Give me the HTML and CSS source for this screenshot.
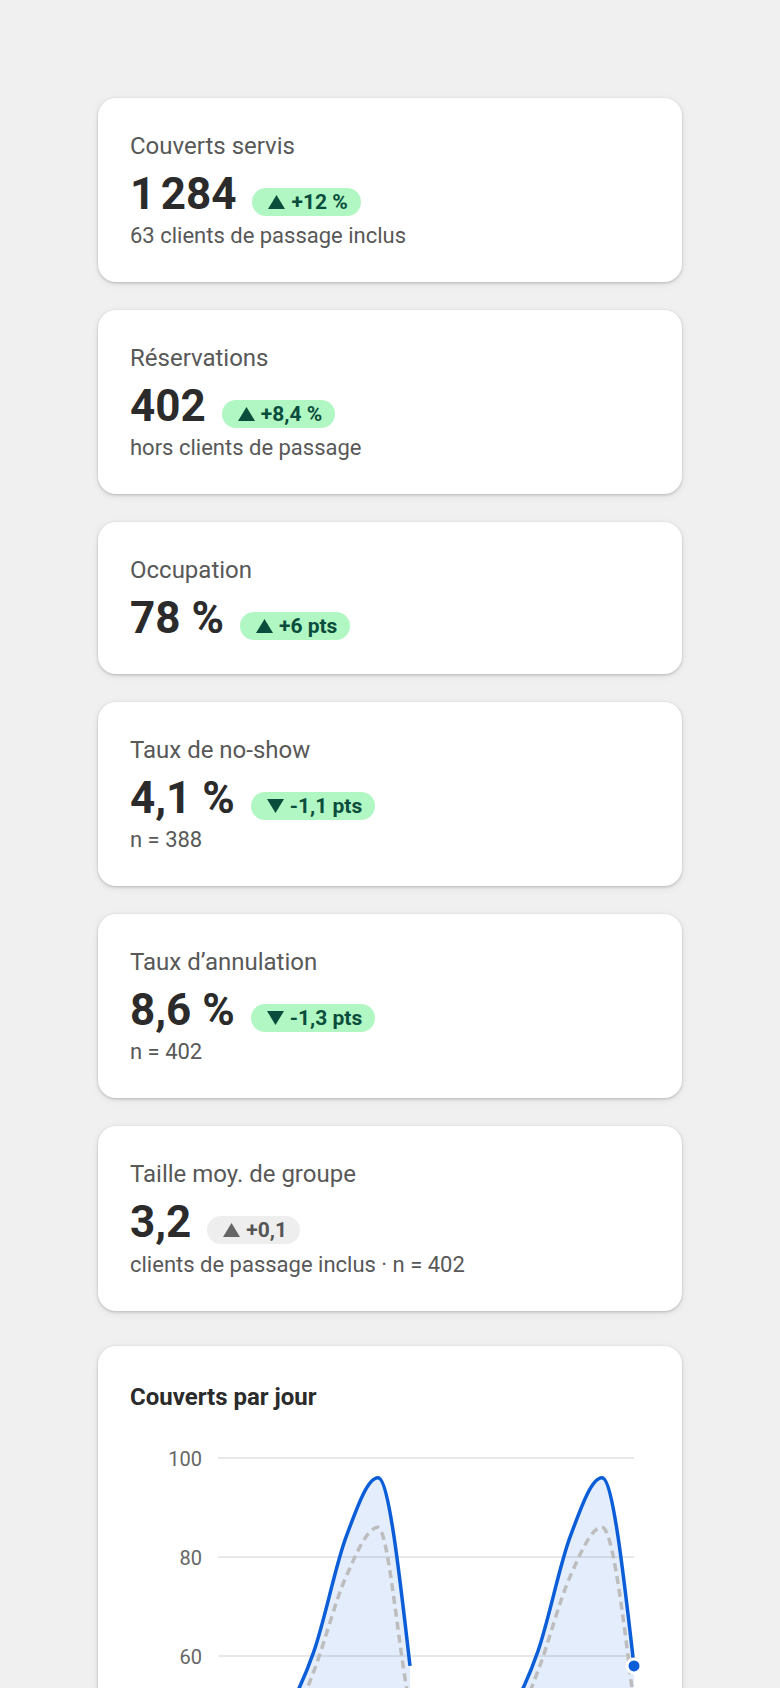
FILE: index.html
```html
<!DOCTYPE html>
<html lang="fr">
<head>
    <meta charset="UTF-8">
    <meta name="viewport" content="width=device-width, initial-scale=1.0">
    <title>Tableau de bord — Salle</title>
    <link rel="stylesheet" href="styles.css">
</head>
<body>
    <main class="page">
        <section class="card">
            <div class="kpi-label">Couverts servis</div>
            <div class="kpi-row">
                <span class="kpi-value">1&#8239;284</span>
                <span class="badge up"><svg viewBox="0 0 16 13"><path d="M8 0L16 13H0Z"/></svg>+12&nbsp;%</span>
            </div>
            <div class="kpi-sub">63 clients de passage inclus</div>
        </section>

        <section class="card">
            <div class="kpi-label">Réservations</div>
            <div class="kpi-row">
                <span class="kpi-value">402</span>
                <span class="badge up"><svg viewBox="0 0 16 13"><path d="M8 0L16 13H0Z"/></svg>+8,4&nbsp;%</span>
            </div>
            <div class="kpi-sub">hors clients de passage</div>
        </section>

        <section class="card">
            <div class="kpi-label">Occupation</div>
            <div class="kpi-row">
                <span class="kpi-value">78&nbsp;%</span>
                <span class="badge up"><svg viewBox="0 0 16 13"><path d="M8 0L16 13H0Z"/></svg>+6 pts</span>
            </div>
        </section>

        <section class="card">
            <div class="kpi-label">Taux de no-show</div>
            <div class="kpi-row">
                <span class="kpi-value">4,1&nbsp;%</span>
                <span class="badge up"><svg viewBox="0 0 16 13"><path d="M0 0H16L8 13Z"/></svg>-1,1 pts</span>
            </div>
            <div class="kpi-sub">n = 388</div>
        </section>

        <section class="card">
            <div class="kpi-label">Taux d’annulation</div>
            <div class="kpi-row">
                <span class="kpi-value">8,6&nbsp;%</span>
                <span class="badge up"><svg viewBox="0 0 16 13"><path d="M0 0H16L8 13Z"/></svg>-1,3 pts</span>
            </div>
            <div class="kpi-sub">n = 402</div>
        </section>

        <section class="card">
            <div class="kpi-label">Taille moy. de groupe</div>
            <div class="kpi-row">
                <span class="kpi-value">3,2</span>
                <span class="badge flat"><svg viewBox="0 0 16 13"><path d="M8 0L16 13H0Z"/></svg>+0,1</span>
            </div>
            <div class="kpi-sub">clients de passage inclus · n = 402</div>
        </section>

        <section class="card chart-card">
            <h2 class="chart-title">Couverts par jour</h2>
            <svg class="chart" viewBox="0 0 521 300" width="521" height="300">
                <g class="grid">
                    <line x1="88" y1="28" x2="504" y2="28"/>
                    <line x1="88" y1="127" x2="504" y2="127"/>
                    <line x1="88" y1="226" x2="504" y2="226"/>
                </g>
                <g class="axis-label">
                    <text x="72" y="35.5">100</text>
                    <text x="72" y="134.5">80</text>
                    <text x="72" y="233.5">60</text>
                </g>
                <!-- semaine courante : fermé le jour 7 -->
                <path class="area" d="M88,305.2 C98.67,315.1 109.33,325 120,325 C130.67,325 141.33,307.68 152,290.35 C162.67,273.02 173.33,251.58 184,221.05 C194.67,190.52 205.33,136.07 216,107.2 C226.67,78.33 237.33,47.8 248,47.8 C258.67,47.8 269.33,141.85 280,235.9 L280,330 L88,330 Z"/>
                <path class="area" d="M344,325 C354.67,316.34 365.33,307.68 376,290.35 C386.67,273.02 397.33,251.58 408,221.05 C418.67,190.52 429.33,136.07 440,107.2 C450.67,78.33 461.33,47.8 472,47.8 C482.67,47.8 493.33,141.85 504,235.9 L504,330 L344,330 Z"/>
                <!-- période précédente -->
                <path class="line-prev" d="M88,334.9 C98.67,344.8 109.33,354.7 120,354.7 C130.67,354.7 141.33,334.08 152,315.1 C162.67,296.12 173.33,268.9 184,240.85 C194.67,212.8 205.33,170.73 216,146.8 C226.67,122.87 237.33,97.3 248,97.3 C258.67,97.3 269.33,229.3 280,275.5 C290.67,321.7 301.33,374.5 312,374.5 C322.67,374.5 333.33,354.7 344,344.8 C354.67,334.9 365.33,332.43 376,315.1 C386.67,297.77 397.33,268.9 408,240.85 C418.67,212.8 429.33,170.73 440,146.8 C450.67,122.87 461.33,97.3 472,97.3 C482.67,97.3 493.33,186.4 504,275.5"/>
                <path class="line-cur" d="M88,305.2 C98.67,315.1 109.33,325 120,325 C130.67,325 141.33,307.68 152,290.35 C162.67,273.02 173.33,251.58 184,221.05 C194.67,190.52 205.33,136.07 216,107.2 C226.67,78.33 237.33,47.8 248,47.8 C258.67,47.8 269.33,141.85 280,235.9"/>
                <path class="line-cur" d="M344,325 C354.67,316.34 365.33,307.68 376,290.35 C386.67,273.02 397.33,251.58 408,221.05 C418.67,190.52 429.33,136.07 440,107.2 C450.67,78.33 461.33,47.8 472,47.8 C482.67,47.8 493.33,141.85 504,235.9"/>
                <circle class="dot" cx="504" cy="235.9" r="7"/>
            </svg>
        </section>
    </main>
</body>
</html>
```

FILE: styles.css
```css
body {
    margin: 0;
    background: #f0f0f0;
    font-family: Roboto, "Liberation Sans", sans-serif;
    color: #2b2b2b;
}

.page {
    display: flex;
    flex-direction: column;
    gap: 28px;
    padding: 98px 98px 0;
}

.card {
    background: #fff;
    border-radius: 18px;
    padding: 32px 32px 30px;
    box-shadow: 0 1px 3px rgba(0, 0, 0, 0.2), 0 2px 8px rgba(0, 0, 0, 0.07);
}

.kpi-label {
    font-size: 24px;
    line-height: 1.4;
    color: #585858;
    margin-bottom: 4px;
}

.kpi-row {
    display: flex;
    align-items: baseline;
    gap: 16px;
}

.kpi-value {
    font-size: 44px;
    line-height: 52.5px;
    font-weight: 700;
    color: #2b2b2b;
}

.badge {
    display: inline-flex;
    align-items: baseline;
    gap: 6px;
    padding: 1px 13px 1px 16px;
    border-radius: 999px;
    font-size: 21px;
    line-height: 26px;
    font-weight: 700;
}

.badge svg {
    width: 17px;
    height: 14px;
    fill: currentColor;
}

.badge.up {
    background: #b1f7c3;
    color: #0a4d3c;
}

.badge.flat {
    background: #eeeeee;
    color: #555;
}

.badge.flat svg {
    fill: #666;
}

.kpi-sub {
    font-size: 22px;
    line-height: 32px;
    color: #585858;
}

.chart-card {
    margin-top: 7px;
    padding-bottom: 0;
}

.chart-title {
    margin: 0;
    font-size: 24px;
    line-height: 38px;
    font-weight: 700;
    color: #2b2b2b;
}

.chart {
    display: block;
    margin-top: 14px;
}

.grid line {
    stroke: #e8e8e8;
    stroke-width: 2;
}

.axis-label {
    font-size: 20px;
    fill: #666;
    text-anchor: end;
}

.area {
    fill: rgba(11, 94, 215, 0.11);
}

.line-prev {
    fill: none;
    stroke: #bdbdbd;
    stroke-width: 3.5;
    stroke-dasharray: 8 5;
}

.line-cur {
    fill: none;
    stroke: #0b5ed7;
    stroke-width: 3.5;
    stroke-linejoin: round;
}

.dot {
    fill: #0b5ed7;
    stroke: #fff;
    stroke-width: 3;
}
```
